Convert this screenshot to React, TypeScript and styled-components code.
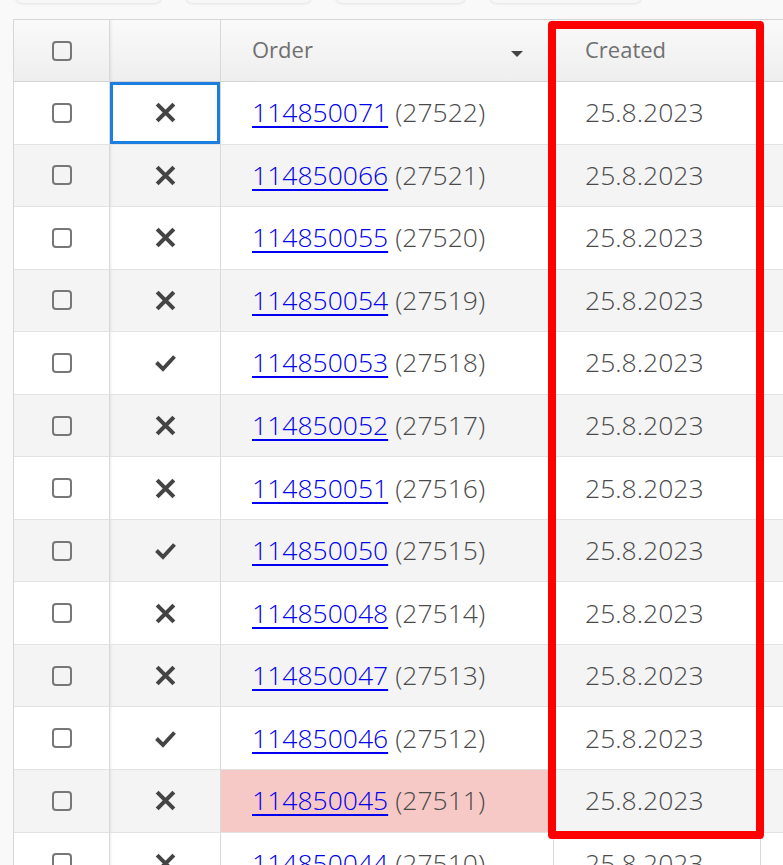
import React from "react";
import styled, { createGlobalStyle } from "styled-components";

const GlobalStyle = createGlobalStyle`
  html, body {
    margin: 0;
    padding: 0;
    background: #f9f9f9;
    overflow: hidden;
    font-family: "Open Sans", "Noto Sans", sans-serif;
  }
`;

const Page = styled.div`
  padding: 0 0 0 13px;
  width: 1100px;
`;

const Toolbar = styled.div`
  display: flex;
  gap: 23px;
  margin-top: -30px;
  padding-left: 2px;
  height: 33px;
`;

const ToolButton = styled.div<{ $w: number }>`
  width: ${(p) => p.$w}px;
  height: 33px;
  background: #f7f7f7;
  border-radius: 8px;
  box-shadow: 0 1px 3px rgba(0, 0, 0, 0.1);
`;

const TableWrap = styled.div`
  position: relative;
  margin-top: 16px;
`;

const Grid = styled.div`
  display: grid;
  grid-template-columns: 96px 111px 333px 207px 240px;
  grid-template-rows: 62px;
  grid-auto-rows: 62.55px;
  border-left: 1px solid #d6d6d6;
  border-top: 1px solid #d6d6d6;
`;

const HeadCell = styled.div<{ $shadow?: boolean }>`
  box-sizing: border-box;
  display: flex;
  align-items: center;
  justify-content: space-between;
  padding: 0 30px 3px 31px;
  background: linear-gradient(#fafafa, #eeeeee);
  border-right: 1px solid #d8d8d8;
  border-bottom: 1px solid #d4d4d4;
  color: #707070;
  font-size: 22px;
  font-weight: 400;
  box-shadow: ${(p) => (p.$shadow ? "inset 3px 0 3px -2px rgba(0,0,0,0.08)" : "none")};
`;

const CenterHead = styled(HeadCell)`
  justify-content: center;
  padding: 0;
`;

const Caret = styled.span`
  width: 0;
  height: 0;
  border-left: 6px solid transparent;
  border-right: 6px solid transparent;
  border-top: 6px solid #444;
  margin-top: 10px;
`;

const Cell = styled.div<{ $stripe: boolean; $pink?: boolean; $shadow?: boolean; $focus?: boolean }>`
  box-sizing: border-box;
  display: flex;
  align-items: center;
  padding: 0 30px 1px 31px;
  background: ${(p) => (p.$pink ? "#f6c9c7" : p.$stripe ? "#f4f4f4" : "#ffffff")};
  border-right: 1px solid #d8d8d8;
  border-bottom: 1px solid #e3e3e3;
  color: #4a4a4a;
  font-size: 26.5px;
  font-weight: 300;
  white-space: nowrap;
  box-shadow: ${(p) =>
    p.$focus
      ? "inset 0 0 0 3px #1c7fe0"
      : p.$shadow
      ? "inset 3px 0 3px -2px rgba(0,0,0,0.08)"
      : "none"};
`;

const CenterCell = styled(Cell)`
  justify-content: center;
  padding: 0;
`;

const Checkbox = styled.span`
  box-sizing: border-box;
  width: 20px;
  height: 20px;
  border: 2px solid #777777;
  border-radius: 4px;
`;

const OrderLink = styled.a`
  color: #0000ee;
  text-decoration: underline;
  text-decoration-thickness: 2px;
  text-underline-offset: 4px;
  margin-right: 7px;
`;

const Highlight = styled.div`
  position: absolute;
  left: 535px;
  top: 2px;
  width: 216px;
  height: 818px;
  box-sizing: border-box;
  border: 8px solid #ff0000;
  border-radius: 4px;
  pointer-events: none;
`;

const CrossIcon = () => (
  <svg width="21" height="21" viewBox="0 0 21 21">
    <path d="M3.6 3.6 L17.4 17.4 M17.4 3.6 L3.6 17.4" stroke="#444" strokeWidth="4.1" strokeLinecap="square" fill="none" />
  </svg>
);

const CheckIcon = () => (
  <svg width="23" height="19" viewBox="0 0 23 19">
    <polyline points="2.5,9.5 9,16 20.5,3.5" stroke="#444" strokeWidth="3.9" strokeLinecap="butt" strokeLinejoin="miter" fill="none" />
  </svg>
);

type Row = { id: string; num: string; ok: boolean; pink?: boolean };

const rows: Row[] = [
  { id: "114850071", num: "27522", ok: false },
  { id: "114850066", num: "27521", ok: false },
  { id: "114850055", num: "27520", ok: false },
  { id: "114850054", num: "27519", ok: false },
  { id: "114850053", num: "27518", ok: true },
  { id: "114850052", num: "27517", ok: false },
  { id: "114850051", num: "27516", ok: false },
  { id: "114850050", num: "27515", ok: true },
  { id: "114850048", num: "27514", ok: false },
  { id: "114850047", num: "27513", ok: false },
  { id: "114850046", num: "27512", ok: true },
  { id: "114850045", num: "27511", ok: false, pink: true },
  { id: "114850044", num: "27510", ok: false },
];

export default function App() {
  return (
    <>
      <GlobalStyle />
      <Page>
        <Toolbar>
          <ToolButton $w={147} />
          <ToolButton $w={127} />
          <ToolButton $w={131} />
          <ToolButton $w={153} />
        </Toolbar>
        <TableWrap>
          <Grid>
            <CenterHead>
              <Checkbox />
            </CenterHead>
            <CenterHead $shadow />
            <HeadCell>
              <span>Order</span>
              <Caret />
            </HeadCell>
            <HeadCell>
              <span>Created</span>
            </HeadCell>
            <HeadCell />
            {rows.map((r, i) => {
              const stripe = i % 2 === 1;
              return (
                <React.Fragment key={r.id}>
                  <CenterCell $stripe={stripe}>
                    <Checkbox />
                  </CenterCell>
                  <CenterCell $stripe={stripe} $shadow $focus={i === 0}>
                    {r.ok ? <CheckIcon /> : <CrossIcon />}
                  </CenterCell>
                  <Cell $stripe={stripe} $pink={r.pink}>
                    <OrderLink href="#">{r.id}</OrderLink>({r.num})
                  </Cell>
                  <Cell $stripe={stripe}>25.8.2023</Cell>
                  <Cell $stripe={stripe} />
                </React.Fragment>
              );
            })}
          </Grid>
          <Highlight />
        </TableWrap>
      </Page>
    </>
  );
}
